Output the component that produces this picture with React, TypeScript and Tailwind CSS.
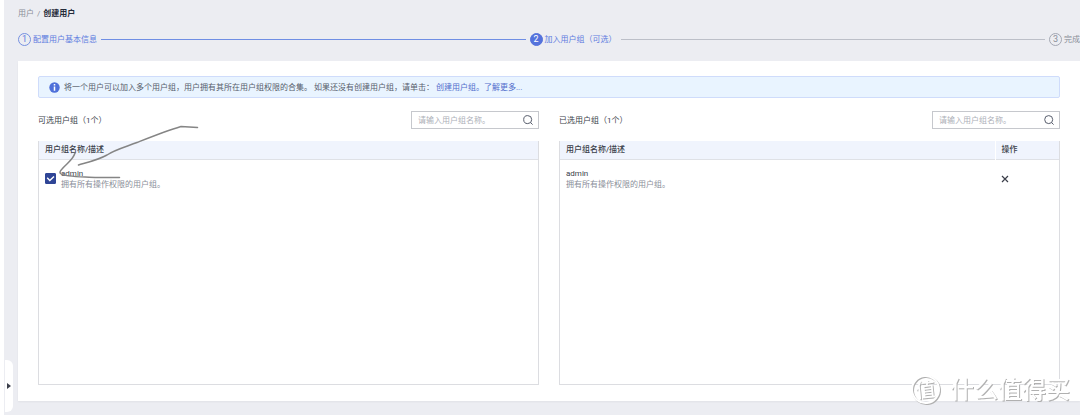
import { useState } from 'react';

interface Group {
  id: string;
  name: string;
  description: string;
}

const GROUPS: Group[] = [
  { id: 'admin', name: 'admin', description: '拥有所有操作权限的用户组。' },
];

function StepLine({ active }: { active?: boolean }) {
  return <li aria-hidden="true" className={active ? 'mx-1 h-px flex-1 bg-[#6f8ee4]' : 'mx-1 h-px flex-1 bg-[#bcbfc8]'} />;
}

function Step({ num, title, status }: { num: number; title: string; status: 'done' | 'current' | 'wait' }) {
  const circle = {
    done: 'border-[#7590e0] text-[#5e7ce0]',
    current: 'border-[#5472dc] bg-[#5472dc] text-white',
    wait: 'border-[#a3a7b3] text-[#8a8e99]',
  }[status];
  return (
    <li className="flex shrink-0 items-center gap-0.5">
      <span className={`flex size-[13px] items-center justify-center rounded-full border text-[9px] leading-none ${circle}`}>
        {num}
      </span>
      <span className={status === 'wait' ? 'text-[#8a8e99]' : 'text-[#5e7ce0]'}>{title}</span>
    </li>
  );
}

function SearchBox({ label }: { label: string }) {
  return (
    <div className="flex h-[18px] w-32 items-center border border-[#c6c8cd] bg-white pr-1 pl-1.5">
      <input
        type="text"
        aria-label={label}
        placeholder="请输入用户组名称。"
        className="min-w-0 flex-1 bg-transparent outline-none placeholder:text-[#adb0b8]"
      />
      <button type="button" aria-label="搜索" className="text-[#575d6c]">
        <svg className="size-3" viewBox="0 0 12 12" fill="none" stroke="currentColor">
          <circle cx="5.7" cy="5.6" r="4" />
          <path d="M8.6 8.6 10.6 10.6" />
        </svg>
      </button>
    </div>
  );
}

function PanelHeader({ title, searchLabel }: { title: string; searchLabel: string }) {
  return (
    <div className="flex items-center justify-between">
      <h2>{title}</h2>
      <SearchBox label={searchLabel} />
    </div>
  );
}

function GroupText({ group }: { group: Group }) {
  return (
    <>
      <span className="block">{group.name}</span>
      <span className="block text-[#8a8e99]">{group.description}</span>
    </>
  );
}

export default function App() {
  const [selected, setSelected] = useState<string[]>(['admin']);
  const chosen = GROUPS.filter((g) => selected.includes(g.id));

  function toggle(id: string) {
    setSelected((prev) => (prev.includes(id) ? prev.filter((x) => x !== id) : [...prev, id]));
  }

  return (
    <div className="relative min-h-screen overflow-hidden bg-white pl-1 font-[Roboto,'Noto_Sans_CJK_SC',sans-serif] text-[8px] leading-[11px] text-[#3b3f4a]">
      <div className="min-h-screen bg-[#ecedf2] pt-2 pb-3 pl-3.5">
        {/* Breadcrumb */}
        <nav className="flex gap-[3px]">
          <a href="#users" className="text-[#8a8e99]">用户</a>
          <span className="text-[#8a8e99]">/</span>
          <span className="font-bold text-[#252b3a]">创建用户</span>
        </nav>

        {/* Steps */}
        <ol className="mt-[13px] flex h-3.5 items-center">
          <Step num={1} title="配置用户基本信息" status="done" />
          <StepLine active />
          <Step num={2} title="加入用户组（可选）" status="current" />
          <StepLine />
          <Step num={3} title="完成" status="wait" />
        </ol>

        <main className="mt-[15px] bg-white px-5 pt-[15px] pb-4 shadow-xs">
          {/* Tip */}
          <div className="flex h-[22px] items-center rounded-xs border border-[#cfdcfb] bg-[#e9f4ff] px-2.5 text-[#575d6c]">
            <svg className="mr-1 size-[11px] shrink-0" viewBox="0 0 11 11">
              <circle cx="5.5" cy="5.5" r="5.2" fill="#4f70da" />
              <path d="M5.5 2v1.5M5.5 4.5v4.2" stroke="#fff" strokeWidth="1.5" />
            </svg>
            <p>
              将一个用户可以加入多个用户组，用户拥有其所在用户组权限的合集。 如果还没有创建用户组，请单击：{' '}
              <a href="#create-group" className="text-[#526ecc]">创建用户组。</a>
              <a href="#more" className="text-[#526ecc]">了解更多...</a>
            </p>
          </div>

          <div className="mt-[13px] grid grid-cols-2 gap-5">
            <section className="flex flex-col gap-3">
              <PanelHeader title="可选用户组（1个）" searchLabel="搜索可选用户组" />
              <div className="min-h-[244px] border border-t-0 border-[#dcdde1]">
                <table className="w-full text-left">
                  <thead>
                    <tr className="h-[18px] border-b border-[#dfe1e6] bg-[#f0f4fd]">
                      <th className="px-1.5 font-medium">用户组名称/描述</th>
                    </tr>
                  </thead>
                  <tbody>
                    {GROUPS.map((g) => (
                      <tr key={g.id}>
                        <td className="px-1.5 py-2">
                          <label className="flex items-center gap-[5px]">
                            <span className="grid size-[11px] place-items-center">
                              <input
                                type="checkbox"
                                checked={selected.includes(g.id)}
                                onChange={() => toggle(g.id)}
                                className="peer col-start-1 row-start-1 size-[11px] appearance-none rounded-[1px] border border-[#adb0b8] checked:border-[#2f4596] checked:bg-[#2f4596]"
                              />
                              <svg
                                className="pointer-events-none col-start-1 row-start-1 hidden size-[11px] peer-checked:block"
                                viewBox="0 0 11 11"
                                fill="none"
                                stroke="#fff"
                                strokeWidth="1.4"
                              >
                                <path d="M2.2 4.8 4.8 7.6 9 3.4" />
                              </svg>
                            </span>
                            <span>
                              <GroupText group={g} />
                            </span>
                          </label>
                        </td>
                      </tr>
                    ))}
                  </tbody>
                </table>
              </div>
            </section>

            <section className="flex flex-col gap-3">
              <PanelHeader title="已选用户组（1个）" searchLabel="搜索已选用户组" />
              <div className="min-h-[244px] border border-t-0 border-[#dcdde1]">
                <table className="w-full text-left">
                  <thead>
                    <tr className="h-[18px] border-b border-[#dfe1e6] bg-[#f0f4fd]">
                      <th className="px-1.5 font-medium">用户组名称/描述</th>
                      <th className="w-16 border-l border-white px-1.5 font-medium">操作</th>
                    </tr>
                  </thead>
                  <tbody>
                    {chosen.map((g) => (
                      <tr key={g.id}>
                        <td className="px-1.5 py-2">
                          <GroupText group={g} />
                        </td>
                        <td className="px-1.5">
                          <button type="button" aria-label="移除" onClick={() => toggle(g.id)} className="block">
                            <svg className="size-2" viewBox="0 0 8 8" stroke="#3b3f4a" strokeWidth="1.2">
                              <path d="M1 1 7 7M7 1 1 7" />
                            </svg>
                          </button>
                        </td>
                      </tr>
                    ))}
                  </tbody>
                </table>
              </div>
            </section>
          </div>
        </main>
      </div>

      {/* Sidebar handle */}
      <button
        type="button"
        aria-label="展开侧栏"
        className="absolute bottom-[3px] left-[5px] flex h-[52px] w-2 items-center justify-center rounded-r-md bg-white"
      >
        <svg className="h-1.5 w-1" viewBox="0 0 4 6" fill="#3b3f4a">
          <path d="M0 0 4 3 0 6Z" />
        </svg>
      </button>

      {/* Hand-drawn arrow */}
      <svg
        className="pointer-events-none absolute top-[120px] left-[50px] h-[64px] w-[152px]"
        viewBox="50 120 152 64"
        fill="none"
        stroke="#858585"
        strokeWidth="1.5"
        strokeLinecap="round"
        strokeLinejoin="round"
      >
        <path d="M197.5 127.5 181 126.500C166 131 151 137 137 142.500C125 147 114 150 107 155C98 160 89 162 78.500 165" />
        <path d="M75 153C73 160 67 163 62 169Q59 172 60.500 173.500C66 177.500 85 176.500 97 177.500L119.500 177.500" />
      </svg>

      {/* Watermark */}
      <div className="pointer-events-none absolute right-2.5 bottom-[11px] flex items-center gap-2.5 font-medium text-white drop-shadow-[1px_1px_0_#b0b0b0]">
        <span className="flex size-[29px] -rotate-6 items-center justify-center rounded-full border-2 border-white text-[20px] leading-none">
          值
        </span>
        <span className="text-[24px] leading-[28px]">什么值得买</span>
      </div>
    </div>
  );
}
